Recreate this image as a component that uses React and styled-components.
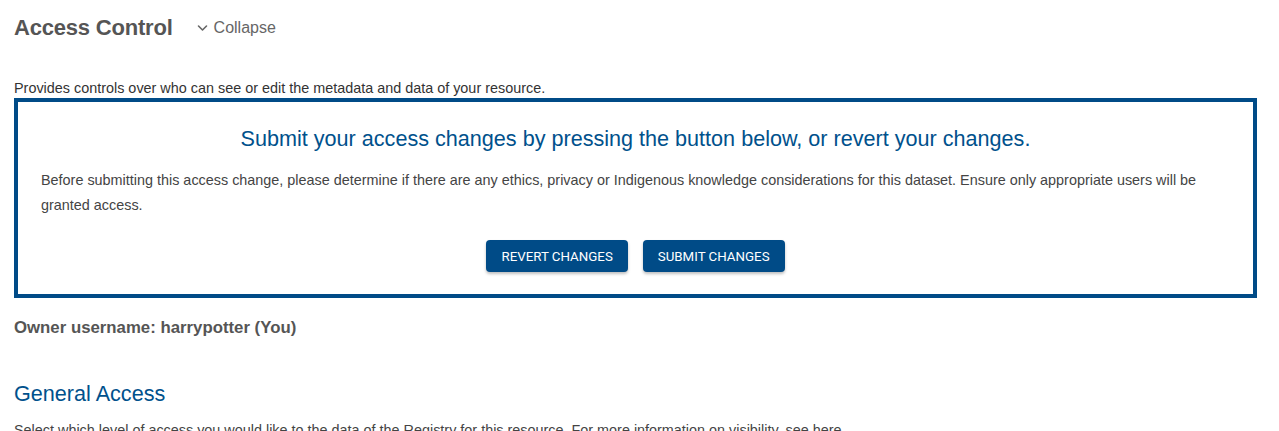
import React from "react";
import styled, { createGlobalStyle } from "styled-components";

const Global = createGlobalStyle`
  html, body { margin: 0; padding: 0; background: #fff; }
  body { font-family: "Liberation Sans", Arial, sans-serif; color: #333; }
  * { box-sizing: border-box; }
`;

const Page = styled.div`
  padding: 14px 22px 0 14px;
  height: 431px;
  overflow: hidden;
`;

const TitleRow = styled.div`
  display: flex;
  align-items: center;
  height: 28px;
`;

const Title = styled.h2`
  margin: 0;
  font-size: 22px;
  font-weight: 700;
  color: #555;
  line-height: 28px;
  letter-spacing: -0.2px;
`;

const CollapseBtn = styled.button`
  display: flex;
  align-items: center;
  gap: 6px;
  margin-left: 24px;
  padding: 0;
  border: 0;
  background: none;
  font-family: "Liberation Sans", Arial, sans-serif;
  font-size: 16px;
  color: #666;
  cursor: pointer;
`;

const Description = styled.p`
  margin: 38px 0 0;
  font-size: 14.4px;
  line-height: 16px;
  color: #333;
`;

const NoticeBox = styled.section`
  margin-top: 2px;
  border: 4px solid #004b87;
  padding: 20px 23px 22px;
  height: 200px;
`;

const NoticeTitle = styled.h3`
  margin: 0;
  text-align: center;
  font-size: 21.6px;
  font-weight: 400;
  color: #00518c;
  line-height: 34px;
`;

const NoticeText = styled.p`
  margin: 12px 0 0;
  font-size: 14.4px;
  line-height: 25px;
  color: #444;
`;

const Actions = styled.div`
  display: flex;
  justify-content: center;
  gap: 15px;
  margin-top: 22px;
`;

const ActionButton = styled.button`
  height: 32px;
  padding: 0 15px;
  border: 0;
  border-radius: 4px;
  background: #004b87;
  color: #fff;
  font-family: Roboto, "Liberation Sans", sans-serif;
  font-size: 13.3px;
  font-weight: 400;
  text-transform: uppercase;
  box-shadow: 0 2px 3px rgba(0, 0, 0, 0.25);
  cursor: pointer;
`;

const Owner = styled.p`
  margin: 20px 0 0;
  font-size: 16.8px;
  font-weight: 700;
  color: #555;
  line-height: 20px;
`;

const SectionTitle = styled.h3`
  margin: 44px 0 0;
  font-size: 21.6px;
  font-weight: 400;
  color: #00518c;
  line-height: 24px;
`;

const SectionText = styled.p`
  margin: 16px 0 0;
  font-size: 14.4px;
  color: #444;
`;

const Chevron = () => (
  <svg width="11" height="8" viewBox="0 0 11 8" fill="none" stroke="#666" strokeWidth="1.6" strokeLinecap="round" strokeLinejoin="round">
    <path d="M1.5 2l4 4 4-4" />
  </svg>
);

export default function App() {
  return (
    <>
      <Global />
      <Page>
        <TitleRow>
          <Title>Access Control</Title>
          <CollapseBtn>
            <Chevron />
            Collapse
          </CollapseBtn>
        </TitleRow>
        <Description>
          Provides controls over who can see or edit the metadata and data of your resource.
        </Description>
        <NoticeBox>
          <NoticeTitle>
            Submit your access changes by pressing the button below, or revert your changes.
          </NoticeTitle>
          <NoticeText>
            Before submitting this access change, please determine if there are any ethics, privacy or Indigenous
            knowledge considerations for this dataset. Ensure only appropriate users will be granted access.
          </NoticeText>
          <Actions>
            <ActionButton>Revert changes</ActionButton>
            <ActionButton>Submit changes</ActionButton>
          </Actions>
        </NoticeBox>
        <Owner>Owner username: harrypotter (You)</Owner>
        <SectionTitle>General Access</SectionTitle>
        <SectionText>
          Select which level of access you would like to the data of the Registry for this resource. For more information on visibility, see here.
        </SectionText>
      </Page>
    </>
  );
}
